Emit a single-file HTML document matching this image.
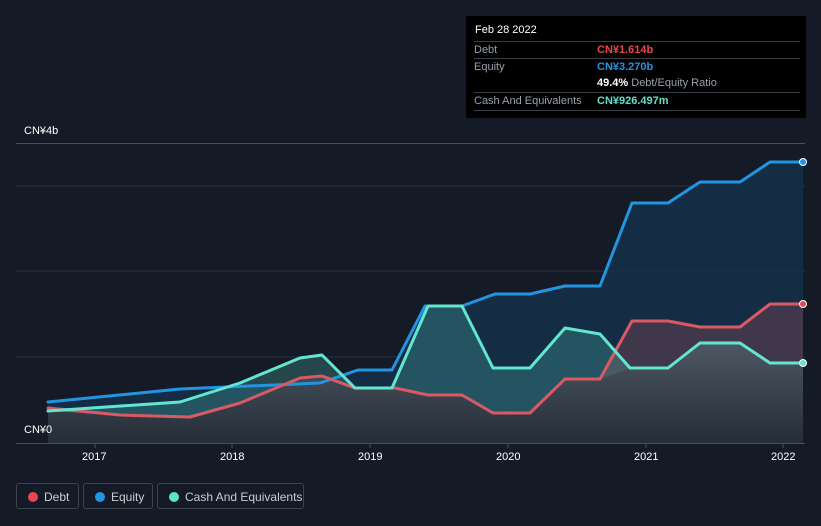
<!DOCTYPE html>
<html><head><meta charset="utf-8"><style>
body{margin:0;width:821px;height:526px;background:#151b26;font-family:"Liberation Sans","Noto Sans CJK SC",sans-serif;overflow:hidden;position:relative}
.tt{position:absolute;left:466px;top:16px;width:340px;height:102px;background:#000;color:#fff;font-size:11px}
.tt .h{position:absolute;left:9px;top:8px;font-size:11px}
.row{position:absolute;left:8px;width:326px;height:17px;border-top:1px solid #3a3f47;line-height:17px;color:#9aa0a8}
.row span{position:absolute;left:123px;font-weight:bold}
.leg{position:absolute;top:483px;height:26px;border:1px solid #3d434c;border-radius:3px;color:#c8ccd2;font-size:12px;line-height:26px;box-sizing:border-box}
.leg i{position:absolute;top:8px;left:11px;width:10px;height:10px;border-radius:50%}
.leg b{font-weight:normal;position:absolute;left:27px}
.ax{position:absolute;color:#fff;font-size:11px}
</style></head><body>
<svg width="821" height="526" style="position:absolute;left:0;top:0">
<defs><linearGradient id="g" x1="0" y1="0" x2="0" y2="1"><stop offset="0" stop-color="#4d5862"/><stop offset="1" stop-color="#252d38"/></linearGradient></defs>
<g stroke="#2a303a" stroke-width="1">
<line x1="16" y1="186" x2="805" y2="186"/><line x1="16" y1="271" x2="805" y2="271"/><line x1="16" y1="357" x2="805" y2="357"/>
</g>
<line x1="16" y1="143.5" x2="805" y2="143.5" stroke="#4a505a"/>
<polygon fill="#14304a" fill-opacity="0.85" points="48,402 180,389 320,383 358,370 392,370 425,306 462,306 495,294 530,294 565,286 600,286 632,203 668,203 700,182 740,182 770,162 803,162 803,443 48,443"/>
<polygon fill="#e05a66" fill-opacity="0.22" points="48,408 120,415 190,417 240,403 300,378 322,376 355,388 395,388 428,395 462,395 493,413 530,413 565,379 600,379 632,321 668,321 700,327 740,327 770,304 803,304 803,443 48,443"/>
<polygon fill="#5fe0cc" fill-opacity="0.22" points="48,411 180,402 240,383 300,358 322,355 355,388 392,388 428,306 462,306 493,368 530,368 565,328 600,334 630,368 668,368 700,343 740,343 770,363 803,363 803,443 48,443"/>
<polygon fill="url(#g)" points="48,411 120,415 190,417 240,403 300,378 322,376 355,388 395,388 428,395 462,395 493,413 530,413 565,379 600,379 630,368 668,368 700,343 740,343 770,363 803,363 803,443 48,443"/>
<g fill="none" stroke-width="3" stroke-linejoin="round" stroke-linecap="round">
<polyline stroke="#2394e0" points="48,402 180,389 320,383 358,370 392,370 425,306 462,306 495,294 530,294 565,286 600,286 632,203 668,203 700,182 740,182 770,162 803,162"/>
<polyline stroke="#d85a64" points="48,408 120,415 190,417 240,403 300,378 322,376 355,388 395,388 428,395 462,395 493,413 530,413 565,379 600,379 632,321 668,321 700,327 740,327 770,304 803,304"/>
<polyline stroke="#62e6d0" points="48,411 180,402 240,383 300,358 322,355 355,388 392,388 428,306 462,306 493,368 530,368 565,328 600,334 630,368 668,368 700,343 740,343 770,363 803,363"/>
</g>
<circle cx="803" cy="162" r="3.5" fill="#2394e0" stroke="#fff" stroke-width="1"/>
<circle cx="803" cy="304" r="3.5" fill="#e04a55" stroke="#fff" stroke-width="1"/>
<circle cx="803" cy="363" r="3.5" fill="#62e6d0" stroke="#fff" stroke-width="1"/>
<line x1="16" y1="443.5" x2="805" y2="443.5" stroke="#4a505a"/>
<g stroke="#4a505a"><line x1="95" y1="443" x2="95" y2="448"/><line x1="232" y1="443" x2="232" y2="448"/><line x1="370" y1="443" x2="370" y2="448"/><line x1="508" y1="443" x2="508" y2="448"/><line x1="646" y1="443" x2="646" y2="448"/><line x1="783" y1="443" x2="783" y2="448"/></g>
</svg>
<div class="ax" style="left:24px;top:125px">CN¥4b</div>
<div class="ax" style="left:24px;top:424px">CN¥0</div>
<div class="ax" style="left:82px;top:451px">2017</div>
<div class="ax" style="left:220px;top:451px">2018</div>
<div class="ax" style="left:358px;top:451px">2019</div>
<div class="ax" style="left:496px;top:451px">2020</div>
<div class="ax" style="left:634px;top:451px">2021</div>
<div class="ax" style="left:771px;top:451px">2022</div>
<div class="tt">
<div class="h">Feb 28 2022</div>
<div class="row" style="top:25px">Debt<span style="color:#e8474f">CN¥1.614b</span></div>
<div class="row" style="top:42px">Equity<span style="color:#2394e0">CN¥3.270b</span></div>
<div class="row" style="top:59px;border-top:none"><span style="color:#fff">49.4% <em style="font-style:normal;font-weight:normal;color:#9aa0a8">Debt/Equity Ratio</em></span></div>
<div class="row" style="top:76px;border-bottom:1px solid #3a3f47">Cash And Equivalents<span style="color:#5fe0cc">CN¥926.497m</span></div>
</div>
<div class="leg" style="left:16px;width:63px"><i style="background:#e8474f"></i><b>Debt</b></div>
<div class="leg" style="left:83px;width:70px"><i style="background:#2394e0"></i><b>Equity</b></div>
<div class="leg" style="left:157px;width:147px"><i style="background:#5fe0cc"></i><b>Cash And Equivalents</b></div>
</body></html>
